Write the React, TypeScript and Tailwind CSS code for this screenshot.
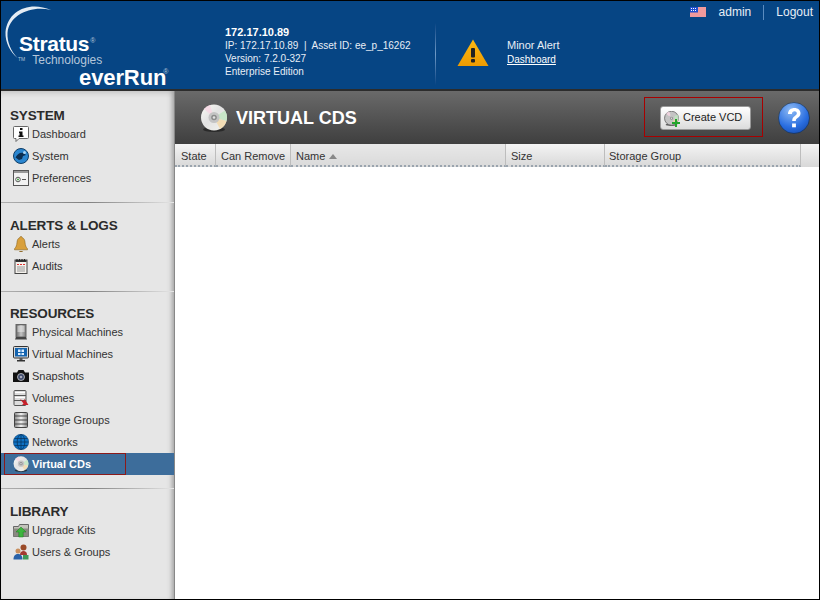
import type { ReactNode } from "react";

function Cd({ size = 18, grey }: { size?: number; grey?: boolean }) {
  return (
    <svg width={size} height={size} viewBox="0 0 28 28">
      <defs>
        <linearGradient id="cdg" x1="0" y1="0" x2="1" y2="1">
          <stop offset="0" stopColor="#fbfbf6" />
          <stop offset="0.45" stopColor="#e2e2e2" />
          <stop offset="1" stopColor="#f4f4ee" />
        </linearGradient>
      </defs>
      <ellipse cx="14" cy="25.500" rx="11" ry="2.500" fill="#1c1c1c" opacity="0.7" />
      <circle cx="14" cy="13.500" r="13" fill={grey ? "#c4c4c4" : "url(#cdg)"} stroke={grey ? "#666" : "none"} strokeWidth="1.500" />
      <path d="M14 13.500L25 6.500A13 13 0 0 1 26.500 17z" fill="#bfe6c0" opacity="0.8" />
      <path d="M14 13.500L26.500 17A13 13 0 0 1 20 25z" fill="#f4d8a8" opacity="0.8" />
      <path d="M14 13.500L4 5A13 13 0 0 1 10 1z" fill="#f7d6e4" opacity="0.8" />
      <circle cx="14" cy="13.500" r="5.500" fill="#c4c4c4" />
      <circle cx="14" cy="13.500" r="2.800" fill="#8c8c8c" />
      <circle cx="14" cy="13.500" r="1.300" fill="#e2e2e2" />
    </svg>
  );
}

const ICONS: Record<string, ReactNode> = {
  dashboard: (
    <svg width="16" height="18" viewBox="0 0 16 18">
      <path d="M1.500 1.500h13a1 1 0 0 1 1 1v10a1 1 0 0 1-1 1H6l-3 3v-3H1.500a1 1 0 0 1-1-1v-10a1 1 0 0 1 1-1z" fill="#fff" stroke="#666" />
      <rect x="7" y="3" width="2.500" height="2" fill="#111" />
      <path d="M6 6.500h3.500v4h1v1.500h-5v-1.500h1v-2.500h-.5z" fill="#111" />
    </svg>
  ),
  system: (
    <svg width="16" height="16" viewBox="0 0 16 16">
      <circle cx="8" cy="8" r="7.500" fill="#2a86d0" stroke="#0f3d66" />
      <path d="M2.500 9.500c2-4 5-5.500 8-4.500l2.500 2-3 1-1 3-3 1z" fill="#0b2f52" />
      <circle cx="11.500" cy="4.500" r="1.500" fill="#a9d4f2" />
    </svg>
  ),
  preferences: (
    <svg width="16" height="16" viewBox="0 0 16 16">
      <rect x="0.500" y="0.500" width="15" height="15" fill="#f2f2f2" stroke="#555" />
      <rect x="1" y="1" width="14" height="2" fill="#999" />
      <circle cx="5" cy="9.500" r="2.300" fill="#fff" stroke="#555" />
      <circle cx="5" cy="9.500" r="1" fill="#3a9a3a" />
      <rect x="9" y="9" width="4" height="1" fill="#555" />
    </svg>
  ),
  alerts: (
    <svg width="16" height="16" viewBox="0 0 16 16">
      <path d="M8 0.500c1 0 1.300.8 1.300 1.300 2 .6 2.500 2.500 2.700 4.500.2 3 1 5 2.500 6.500v1H1.500v-1C3 11.300 3.800 9.300 4 6.300c.2-2 .7-3.900 2.700-4.500C6.700 1.300 7 .5 8 .5z" fill="#d9a03c" stroke="#8a6420" strokeWidth="0.600" />
      <path d="M6 15h4a2 1 0 0 1-4 0z" fill="#8a6420" />
    </svg>
  ),
  audits: (
    <svg width="14" height="16" viewBox="0 0 14 16">
      <rect x="1" y="2" width="12" height="13.500" fill="#f4f1ec" stroke="#444" />
      <rect x="1.500" y="2" width="11" height="2" fill="#333" />
      <path d="M3 1v2M5.500 1v2M8 1v2M10.500 1v2" stroke="#222" />
      <path d="M3 6.500h2M6 6.500h2M9 6.500h2" stroke="#d33" />
      <path d="M3 9h8M3 11h8M3 13h8" stroke="#999" />
    </svg>
  ),
  physical: (
    <svg width="14" height="16" viewBox="0 0 14 16">
      <defs>
        <linearGradient id="pm" x1="0" x2="1" y1="0" y2="0">
          <stop offset="0" stopColor="#666" />
          <stop offset="0.5" stopColor="#c4c4c4" />
          <stop offset="1" stopColor="#777" />
        </linearGradient>
      </defs>
      <rect x="2" y="0.500" width="10" height="12.500" fill="url(#pm)" stroke="#666" />
      <path d="M3.500 3h7M3.500 5h7M3.500 7h7" stroke="#eee" />
      <path d="M1 15.500l1-2.500h10l1 2.500z" fill="#444" />
    </svg>
  ),
  virtual: (
    <svg width="16" height="16" viewBox="0 0 16 16">
      <rect x="0.500" y="0.500" width="15" height="11.500" rx="1" fill="#d8d8d8" stroke="#333" />
      <rect x="2" y="2" width="12" height="8.500" fill="#1565b0" />
      <path d="M5 3.500h2.500v2.500H5zM8.500 3.500H11v2.500H8.500zM5 7h2.500v2H5zM8.500 7H11v2H8.500z" fill="#dfefff" />
      <rect x="6.500" y="12" width="3" height="2" fill="#555" />
      <rect x="4" y="14" width="8" height="1.500" fill="#333" />
    </svg>
  ),
  snapshots: (
    <svg width="16" height="14" viewBox="0 0 16 14">
      <path d="M0 3.500h4l1.500-2.500h5L12 3.500h4V13H0z" fill="#111" />
      <circle cx="8" cy="8" r="3.500" fill="#3d4a6b" stroke="#ccc" strokeWidth="0.800" />
      <circle cx="8" cy="8" r="1.300" fill="#aab" />
    </svg>
  ),
  volumes: (
    <svg width="16" height="16" viewBox="0 0 16 16">
      <rect x="1" y="0.500" width="12" height="15" rx="1" fill="#ddd" stroke="#555" />
      <path d="M1 5.500h12M1 10.500h12" stroke="#555" />
      <path d="M2 2.500h10M2 7.500h10" stroke="#fff" />
      <path d="M7 9l3.500 2 1-2L15.500 15H9l1.500-1.500z" fill="#c8202a" />
    </svg>
  ),
  storage: (
    <svg width="14" height="16" viewBox="0 0 14 16">
      <defs>
        <linearGradient id="st" x1="0" x2="1" y1="0" y2="0">
          <stop offset="0" stopColor="#888" />
          <stop offset="0.5" stopColor="#f2f2f2" />
          <stop offset="1" stopColor="#888" />
        </linearGradient>
      </defs>
      <rect x="0.500" y="0.500" width="13" height="15" rx="1" fill="url(#st)" stroke="#444" />
      <path d="M1 4h12M1 8h12M1 12h12" stroke="#444" />
    </svg>
  ),
  networks: (
    <svg width="16" height="16" viewBox="0 0 16 16">
      <circle cx="8" cy="8" r="7.700" fill="#0f72c4" stroke="#0a3a66" strokeWidth="0.500" />
      <path d="M0.500 8h15M1.500 4.500h13M1.500 11.500h13M8 .5v15" stroke="#06305a" strokeWidth="0.700" />
      <ellipse cx="8" cy="8" rx="3.800" ry="7.500" fill="none" stroke="#06305a" strokeWidth="0.700" />
    </svg>
  ),
  vcd: <Cd size={16} />,
  upgrade: (
    <svg width="16" height="16" viewBox="0 0 16 16">
      <path d="M0.500 4.500h5l1-2h9v12h-15z" fill="#c2c2ba" stroke="#666" />
      <path d="M0.500 6.500h15v8h-15z" fill="#8a8a82" />
      <path d="M8 5l5 5h-2.800v5H5.800v-5H3z" fill="#3db53d" stroke="#1f7a1f" strokeWidth="0.500" />
    </svg>
  ),
  users: (
    <svg width="16" height="16" viewBox="0 0 16 16">
      <circle cx="10.500" cy="3.500" r="3" fill="#9a4a28" />
      <path d="M7 11c0-3 1.500-4 3.500-4s3.500 1 3.500 4z" fill="#a33a30" />
      <circle cx="5" cy="7" r="2.500" fill="#c98f5e" />
      <path d="M0.500 15.500c0-4 2-5.500 4.500-5.500s4.500 1.500 4.500 5.500z" fill="#2a62a8" />
      <rect x="10" y="11" width="5.500" height="4.500" fill="#3d9a58" />
    </svg>
  ),
};

function NavItem({ icon, label, active }: { icon: string; label: string; active?: boolean }) {
  return (
    <div className={`flex h-[22px] items-center ${active ? "bg-[#3d6d9b] font-bold text-white" : "text-[#333]"}`}>
      <div className={`ml-[3px] flex h-[22px] w-[122px] items-center border ${active ? "border-[#8b1a1a]" : "border-transparent"}`}>
        <span className="flex w-[27px] shrink-0 justify-center pl-[5px]">{ICONS[icon]}</span>
        <span className="whitespace-nowrap">{label}</span>
      </div>
    </div>
  );
}

function Section({ title, children }: { title: string; children: ReactNode }) {
  return (
    <div>
      <h2 className="ml-[9px] h-[16px] pt-[1px] text-[13.500px] leading-[16px] font-bold tracking-[-0.15px] text-[#2b2b2b]">{title}</h2>
      <div>{children}</div>
    </div>
  );
}

function Divider({ className }: { className: string }) {
  return <div className={`h-[1px] bg-gradient-to-r from-[#b0b0b0] via-[#808080] to-[#e6e6e6] ${className}`} />;
}

function Sidebar() {
  return (
    <aside className="flex w-[173px] shrink-0 flex-col bg-[#e6e6e6] pt-[16px] text-[11px] shadow-[inset_-5px_0_5px_-3px_#a0a0a0,inset_0_6px_6px_-4px_#c4c4c4]">
      <Section title="SYSTEM">
        <NavItem icon="dashboard" label="Dashboard" />
        <NavItem icon="system" label="System" />
        <NavItem icon="preferences" label="Preferences" />
      </Section>
      <Divider className="mt-[13px] mb-[14px]" />
      <Section title="ALERTS & LOGS">
        <NavItem icon="alerts" label="Alerts" />
        <NavItem icon="audits" label="Audits" />
      </Section>
      <Divider className="mt-[14px] mb-[13px]" />
      <Section title="RESOURCES">
        <NavItem icon="physical" label="Physical Machines" />
        <NavItem icon="virtual" label="Virtual Machines" />
        <NavItem icon="snapshots" label="Snapshots" />
        <NavItem icon="volumes" label="Volumes" />
        <NavItem icon="storage" label="Storage Groups" />
        <NavItem icon="networks" label="Networks" />
        <NavItem icon="vcd" label="Virtual CDs" active />
      </Section>
      <Divider className="mt-[13px] mb-[14px]" />
      <Section title="LIBRARY">
        <NavItem icon="upgrade" label="Upgrade Kits" />
        <NavItem icon="users" label="Users & Groups" />
      </Section>
    </aside>
  );
}

function Logo() {
  return (
    <div className="relative h-[88px] w-[224px] shrink-0 text-white">
      <svg className="absolute top-0 left-0" width="60" height="62" viewBox="0 0 60 62">
        <path d="M50 9C30 0 7 8 4.500 31c-.5 10 4.500 20 12 26C10 50 6 41 6.500 32 8 14 30 4 50 9z" fill="#e4ecf4" />
      </svg>
      <span className="absolute top-[34px] left-[18px] text-[21px] leading-[18px] font-bold tracking-[-0.3px] whitespace-nowrap">
        Stratus<span className="relative -top-[8px] ml-[1px] text-[7px] font-normal text-[#b4c6da]">®</span>
      </span>
      <span className="absolute top-[53px] left-[17px] text-[12px] leading-[12px] whitespace-nowrap text-[#b4c6da]">
        <span className="relative -top-[3px] mr-[7px] text-[5px]">TM</span>Technologies
      </span>
      <span className="absolute top-[67px] left-[78px] text-[22px] leading-[20px] font-bold tracking-[-0.1px] whitespace-nowrap">
        everRun<span className="relative -top-[11px] ml-[-3px] text-[7px] font-normal text-[#b4c6da]">®</span>
      </span>
    </div>
  );
}

function Header() {
  return (
    <header className="relative flex h-[90px] shrink-0 border-b-2 border-[#2c2c2c] bg-[#064584] text-[10px] text-[#e8eef6]">
      <Logo />
      <div className="w-[187px] shrink-0 pt-[24px] leading-[13px] whitespace-nowrap">
        <div className="text-[11px] leading-[14px] font-bold text-white">172.17.10.89</div>
        <div>IP: 172.17.10.89&nbsp; |&nbsp; Asset ID: ee_p_16262</div>
        <div>Version: 7.2.0-327</div>
        <div>Enterprise Edition</div>
      </div>
      <div className="mt-[22px] ml-[23px] h-[62px] w-[1px] bg-gradient-to-b from-[#064584] via-[#6f9ac6] to-[#064584]" />
      <div className="ml-[21px] pt-[38px]">
        <svg width="32" height="28" viewBox="0 0 32 28">
          <defs>
            <linearGradient id="warn" x1="0" x2="0" y1="0" y2="1">
              <stop offset="0" stopColor="#fdb913" />
              <stop offset="1" stopColor="#ee9b00" />
            </linearGradient>
          </defs>
          <path d="M16 0.500L31.500 27H0.500z" fill="url(#warn)" />
          <rect x="14" y="9" width="4" height="9.500" rx="1" fill="#222" />
          <rect x="14" y="20" width="4" height="3.500" rx="1" fill="#222" />
        </svg>
      </div>
      <div className="ml-[18px] pt-[37px] leading-[14px]">
        <div className="text-[11px] text-[#e8eef6]">Minor Alert</div>
        <a className="mt-[1px] block text-[10px] text-white underline">Dashboard</a>
      </div>
      <div className="absolute top-[3px] right-[6px] flex items-center text-[12px] leading-[16px] text-[#e8eef6]">
        <svg className="mr-[13px]" width="16" height="10" viewBox="0 0 16 10">
          <rect width="16" height="10" fill="#fff" />
          <path d="M0 1h16M0 3h16M0 5h16M0 7h16M0 9h16" stroke="#e0343a" />
          <rect width="8" height="5.500" fill="#1f4fd0" />
          <path d="M1 1.500h6M1 3.500h6" stroke="#fff" strokeDasharray="1 1" />
        </svg>
        <span>admin</span>
        <span className="mx-[12px] h-[15px] w-[1px] bg-[#5a8cc0]" />
        <span>Logout</span>
      </div>
    </header>
  );
}

function Toolbar() {
  return (
    <div className="relative flex h-[53px] shrink-0 items-center bg-gradient-to-b from-[#6a6a6a] to-[#3f3f3f]">
      <div className="ml-[25px] flex"><Cd size={28} /></div>
      <h1 className="ml-[8px] pt-[1px] text-[18px] font-bold text-white">VIRTUAL CDS</h1>
      <div className="mr-[56px] mb-[1px] ml-auto flex h-[40px] w-[119px] items-center border border-[#a80000] pt-[2px] pl-[15px]">
        <button className="flex h-[24px] w-[91px] items-center justify-start rounded-[3px] border border-[#999] bg-gradient-to-b from-white to-[#dcdcdc] pb-[2px] pl-[3px] text-[11px] text-[#222]">
          <span className="relative mt-[2px] mr-[4px] flex">
            <Cd size={15} grey />
            <svg className="absolute -right-[1px] -bottom-[1px]" width="8" height="8" viewBox="0 0 8 8">
              <path d="M3 0h2v3h3v2H5v3H3V5H0V3h3z" fill="#22a52c" />
            </svg>
          </span>
          Create VCD
        </button>
      </div>
      <svg className="absolute right-[9px]" width="32" height="32" viewBox="0 0 32 32">
        <defs>
          <radialGradient id="hg" cx="0.4" cy="0.25" r="0.9">
            <stop offset="0" stopColor="#8fbcf5" />
            <stop offset="0.6" stopColor="#2a6ee0" />
            <stop offset="1" stopColor="#1246a8" />
          </radialGradient>
        </defs>
        <circle cx="16" cy="16" r="15.500" fill="url(#hg)" stroke="#123" strokeWidth="0.500" />
        <path d="M10 12c0-4 3-6 6.500-6s6 2.200 6 5.300c0 2.500-1.500 3.700-3 4.700-1.300.9-1.700 1.500-1.700 3h-3.600c0-2.600.7-3.800 2.600-5.100 1.300-.9 2-1.500 2-2.600 0-1.200-.9-2-2.300-2-1.500 0-2.500 1-2.600 2.700z" fill="#fff" />
        <rect x="14.100" y="21.500" width="3.800" height="3.800" fill="#fff" />
      </svg>
    </div>
  );
}

function Th({ cls, children }: { cls: string; children?: ReactNode }) {
  return (
    <div className={`flex h-[23px] shrink-0 items-center border-r border-b-2 border-r-[#bdbdbd] border-b-[#9aa4ae] pt-[3px] [border-bottom-style:dotted] ${cls}`}>
      {children}
    </div>
  );
}

function TableHead() {
  return (
    <div className="flex h-[23px] bg-gradient-to-b from-[#f4f4f4] to-[#d8d8d8] text-[11px] text-[#333]">
      <Th cls="w-[41px] pl-[6px]">State</Th>
      <Th cls="w-[75px] pl-[5px]">Can Remove</Th>
      <Th cls="w-[215px] bg-[#dcdcdc]/50 pl-[5px]">
        Name
        <svg className="ml-[4px]" width="8" height="5" viewBox="0 0 8 5"><path d="M4 0l4 5H0z" fill="#888" /></svg>
      </Th>
      <Th cls="w-[99px] pl-[5px]">Size</Th>
      <Th cls="w-[196px] pl-[4px]">Storage Group</Th>
    </div>
  );
}

export default function App() {
  return (
    <div className="flex h-[600px] w-[820px] flex-col overflow-hidden border border-black font-['Liberation_Sans',Arial,sans-serif]">
      <Header />
      <div className="flex min-h-0 flex-1">
        <Sidebar />
        <main className="flex min-w-0 flex-1 flex-col border-l border-[#888] bg-white">
          <Toolbar />
          <TableHead />
        </main>
      </div>
    </div>
  );
}
